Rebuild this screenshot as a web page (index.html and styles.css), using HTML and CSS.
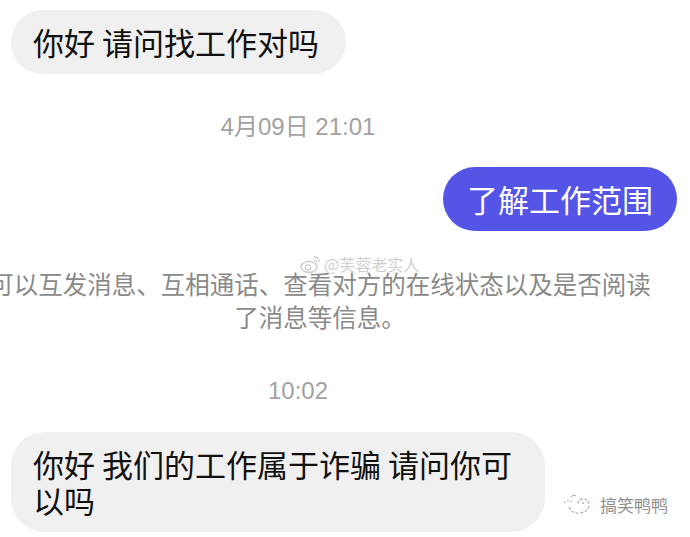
FILE: index.html
```html
<!doctype html>
<html>
<head>
    <meta charset="utf-8">
    <title>聊天记录</title>
    <link rel="stylesheet" href="styles.css">
</head>
<body>

<div class="chat">
    <div class="msg msg-in">
        <div class="bubble">你好 请问找工作对吗</div>
    </div>

    <div class="stamp stamp-first">4月09日 21:01</div>

    <div class="msg msg-out">
        <div class="bubble bubble-blue">了解工作范围</div>
    </div>

    <div class="notice">可以互发消息、互相通话、查看对方的在线状态以及是否阅读了消息等信息。</div>

    <div class="stamp stamp-second">10:02</div>

    <div class="msg msg-in msg-last">
        <div class="bubble bubble-wide">你好 我们的工作属于诈骗 请问你可以吗</div>
    </div>

    <!-- watermarks over the picture -->
    <div class="mark-weibo">
        <svg width="22" height="20" viewBox="0 0 22 20">
            <ellipse cx="9" cy="13" rx="8" ry="5.5" fill="none" stroke="#cdcdcd" stroke-width="1.4"/>
            <circle cx="8" cy="13.5" r="2.6" fill="none" stroke="#cdcdcd" stroke-width="1.2"/>
            <path d="M14 3 Q19 3 19 8" fill="none" stroke="#cdcdcd" stroke-width="1.3"/>
            <path d="M14 6 Q16.5 6 16.5 8.5" fill="none" stroke="#cdcdcd" stroke-width="1.2"/>
        </svg>
        <span>@芙蓉老实人</span>
    </div>

    <div class="mark-duck">
        <svg width="34" height="24" viewBox="0 0 34 24">
            <path d="M4 10 Q8 6 12 9" fill="none" stroke="#b5b5b5" stroke-width="1.2" stroke-dasharray="2 1.5"/>
            <path d="M11 4 Q13 1 16 3" fill="none" stroke="#b5b5b5" stroke-width="1.2"/>
            <path d="M9 14 Q12 21 20 20 Q28 19 29 12 Q29 6 23 6 Q18 6 18 11" fill="none" stroke="#b5b5b5" stroke-width="1.3" stroke-dasharray="3 1.5"/>
            <circle cx="23" cy="10" r="1" fill="#b5b5b5"/>
        </svg>
        <span>搞笑鸭鸭</span>
    </div>
</div>

</body>
</html>
```

FILE: styles.css
```css
body {
    margin: 0;
    background: #fff;
    font-family: "Noto Sans CJK SC", "Noto Sans", sans-serif;
    overflow: hidden;
}

.chat {
    position: relative;
    width: 690px;
    height: 537px;
    display: flex;
    flex-direction: column;
    padding-top: 10px;
    box-sizing: border-box;
}

.msg {
    display: flex;
}
.msg-in {
    justify-content: flex-start;
    padding-left: 11px;
}
.msg-out {
    justify-content: flex-end;
    padding-right: 13px;
    margin-top: 25px;
}

.bubble {
    background: #f0f0f0;
    color: #111;
    font-size: 31px;
    line-height: 40px;
    padding: 12px 27px 12px 22px;
    border-radius: 32px;
}
.bubble-blue {
    background: #5454e6;
    color: #fff;
    padding: 12px 24px;
}
.bubble-wide {
    width: 490px;
    line-height: 36px;
    padding: 14px 22px;
    border-radius: 34px;
}

.stamp {
    width: 596px;
    text-align: center;
    color: #a2a2a2;
    font-size: 24px;
    line-height: 30px;
    font-family: "Liberation Sans", "Noto Sans CJK SC", sans-serif;
}
.stamp-first {
    margin-top: 38px;
}
.stamp-second {
    margin-top: 43px;
}

.notice {
    width: 664px;
    margin-left: -12px;
    margin-top: 36px;
    text-align: center;
    color: #8a8a8a;
    font-size: 24.5px;
    line-height: 33px;
}

.msg-last {
    margin-top: 26px;
}

.mark-weibo {
    position: absolute;
    left: 300px;
    top: 254px;
    display: flex;
    align-items: flex-end;
    gap: 2px;
    color: #d0d0d0;
    font-size: 16px;
    line-height: 20px;
}

.mark-duck {
    position: absolute;
    left: 560px;
    top: 493px;
    display: flex;
    align-items: center;
    gap: 6px;
    color: #8f8f8f;
    font-size: 17px;
    line-height: 24px;
}
```
